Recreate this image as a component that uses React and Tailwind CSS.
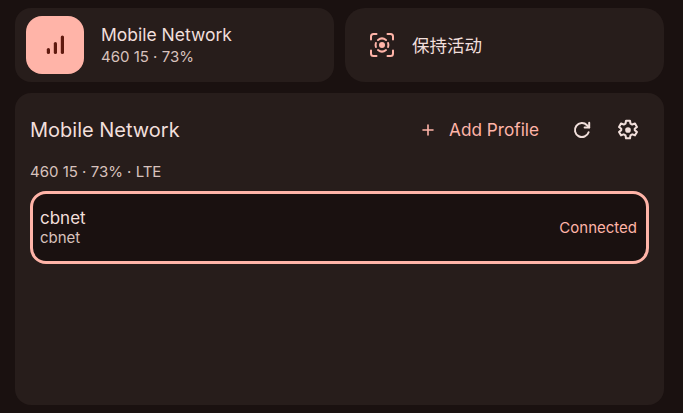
const font = { fontFamily: '"Inter", "Noto Sans CJK SC", sans-serif' };

const SignalIcon = () => (
  <svg width="24" height="24" viewBox="0 0 24 24" fill="#5f1a0f">
    <rect x="3.8" y="15" width="3.2" height="6" rx="1.6" />
    <rect x="10.8" y="9" width="3.2" height="12" rx="1.6" />
    <rect x="17.8" y="2.5" width="3.2" height="18.5" rx="1.6" />
  </svg>
);

const FocusIcon = () => (
  <svg width="26" height="26" viewBox="0 0 26 26" fill="none" stroke="#ffb4a8" strokeWidth="2" strokeLinecap="round" strokeLinejoin="round">
    <path d="M7.5 2H4.5A2.5 2.5 0 0 0 2 4.5V7.5" />
    <path d="M18.5 2H21.5A2.5 2.5 0 0 1 24 4.5V7.5" />
    <path d="M2 18.5V21.5A2.5 2.5 0 0 0 4.5 24H7.5" />
    <path d="M24 18.5V21.5A2.5 2.5 0 0 1 21.5 24H18.5" />
    <path d="M9 8A6.4 6.4 0 0 1 17 8" />
    <path d="M9 18A6.4 6.4 0 0 0 17 18" />
    <path d="M6.9 11A6.4 6.4 0 0 0 6.9 15" />
    <path d="M19.1 11A6.4 6.4 0 0 1 19.1 15" />
    <circle cx="13" cy="13" r="3" fill="#ffb4a8" stroke="none" />
  </svg>
);

const PlusIcon = () => (
  <svg width="24" height="24" viewBox="0 0 24 24" fill="none" stroke="#ffb4a8" strokeWidth="1.6" strokeLinecap="round">
    <path d="M12 7v10M7 12h10" />
  </svg>
);

const RefreshIcon = () => (
  <svg width="24" height="24" viewBox="0 0 24 24" fill="none" stroke="#f1dfdb" strokeWidth="2" strokeLinecap="round" strokeLinejoin="round">
    <path d="M18.6 14.2A7 7 0 1 1 17 7.2L19.2 9.4" />
    <path d="M19.2 4.8V9.4H14.6" />
  </svg>
);

const GearIcon = () => (
  <svg width="24" height="24" viewBox="1 1 22 22" fill="none" stroke="#f1dfdb" strokeWidth="1.9" strokeLinejoin="round">
    <path d="M10.2 3h3.6l.5 2.6 1.6.9 2.5-.9 1.8 3.1-2 1.7v1.2l2 1.7-1.8 3.1-2.5-.9-1.6.9-.5 2.6h-3.6l-.5-2.6-1.6-.9-2.5.9-1.8-3.1 2-1.7v-1.2l-2-1.7 1.8-3.1 2.5.9 1.6-.9z" transform="translate(0 .5)" />
    <circle cx="12" cy="12" r="2.6" fill="#f1dfdb" stroke="none" />
  </svg>
);

export default function App() {
  return (
    <div style={font} className="flex h-[413px] w-[683px] flex-col gap-[11px] overflow-hidden bg-[#1a1110] pb-2 pl-[15px] pr-[19px] pt-2">
      <div className="grid h-[74px] grid-cols-2 gap-[11px]">
        <div className="flex items-center gap-[17px] rounded-[16px] bg-[#271d1b] pl-[11px]">
          <div className="flex h-[58px] w-[58px] items-center justify-center rounded-[16px] bg-[#ffb4a8]">
            <SignalIcon />
          </div>
          <div className="flex flex-col pt-[2px]">
            <span className="text-[17.5px] leading-[22px] text-[#f1dfdb]">Mobile Network</span>
            <span className="text-[15px] leading-[22px] text-[#d8c2bd]">460 15 · 73%</span>
          </div>
        </div>
        <div className="flex items-center gap-[17px] rounded-[20px] bg-[#271d1b] pl-[24px]">
          <FocusIcon />
          <span className="pt-[2px] text-[17.5px] leading-[22px] text-[#f1dfdb]">保持活动</span>
        </div>
      </div>
      <div className="flex flex-1 flex-col rounded-[16px] bg-[#271d1b] px-[15px] pt-[13px]">
        <div className="flex h-[48px] items-center">
          <span className="text-[20px] leading-[28px] text-[#f1dfdb]">Mobile Network</span>
          <div className="ml-auto flex items-center gap-[9px]">
            <PlusIcon />
            <span className="mr-[31px] text-[17.2px] leading-[22px] text-[#ffb4a8]">Add Profile</span>
          </div>
          <div className="flex items-center gap-[22px] pr-[9px]">
            <RefreshIcon />
            <GearIcon />
          </div>
        </div>
        <p className="mt-[8px] text-[15px] leading-[20px] text-[#d8c2bd]">460 15 · 73% · LTE</p>
        <div className="mt-[9px] flex h-[73px] items-center justify-between rounded-[16px] border-[3px] border-[#ffb4a8] bg-[#1a1110] pl-[7px] pr-[9px]">
          <div className="flex flex-col">
            <span className="text-[17px] leading-[20px] text-[#f1dfdb]">cbnet</span>
            <span className="text-[15px] leading-[20px] text-[#d8c2bd]">cbnet</span>
          </div>
          <span className="text-[15px] leading-[20px] text-[#ffb4a8]">Connected</span>
        </div>
      </div>
    </div>
  );
}
